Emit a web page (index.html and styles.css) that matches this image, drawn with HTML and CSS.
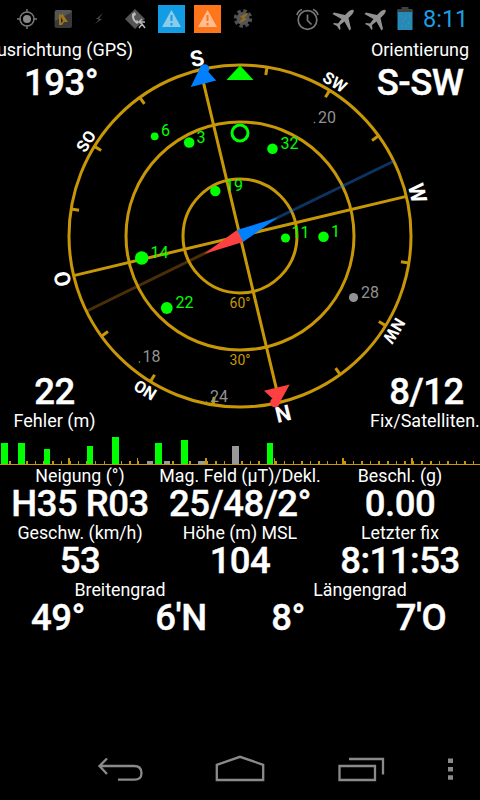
FILE: index.html
```html
<!DOCTYPE html>
<html lang="de">
<head>
<meta charset="utf-8">
<title>GPS Status</title>
<link rel="stylesheet" href="styles.css">
</head>
<body>
<header class="status">
  <svg class="status-icons" width="420" height="38" viewBox="0 0 420 38">
    <g fill="none" stroke="#777" stroke-width="1.5"><circle cx="27" cy="19" r="7"/><path d="M27 9v4M27 25v4M17 19h4M33 19h4"/></g>
    <circle cx="27" cy="19" r="4" fill="#888"/>
    <rect x="54.500" y="10" width="17.500" height="18" rx="2" fill="#393939"/><path d="M55 12q0-2 2-2h13q2 0 2 2l-17 9z" fill="#555"/><path d="M59 14l3 1 0-2 6 9-4 0-2 3-3 0z" fill="#9b7421"/><path d="M61 17v6l2-2z" fill="#29251e"/>
    <path d="M103 13l-7 6 3 .5-4 4.500 7-5-3-.5z" fill="#494949"/>
    <path d="M135 9l10 10-10 10-10-10z" fill="#555"/><path d="M132 14q-1 6 5 10l2-2-2-2-1 1q-2-2-2-5l2-1-1-3z" fill="#bbb"/><path d="M142 19l-3 3 3 2-3 4M142 24l3 4M140 22h5" stroke="#b5b5b5" stroke-width="1.500" fill="none"/>
    <rect x="158" y="5" width="27" height="28" fill="#129ce3"/><path d="M171.500 10l9.500 17h-19z" fill="#8dcbea"/><path d="M171.500 15v6M171.500 23v2.500" stroke="#129ce3" stroke-width="2"/>
    <rect x="194" y="5" width="27" height="28" fill="#ff7519"/><path d="M207.500 10l9.500 17h-19z" fill="#ffbd91"/><path d="M207.500 15v6M207.500 23v2.500" stroke="#ff7519" stroke-width="2"/>
    <circle cx="243" cy="18.500" r="7.500" fill="none" stroke="#505050" stroke-width="3.500" stroke-dasharray="3.4 2.490"/><circle cx="243" cy="18.500" r="6.500" fill="#555"/><path d="M249 12l-9 5 3 1-5 6 9-5-3-1z" fill="#98701c"/>
    <g fill="none" stroke="#777" stroke-width="1.700"><circle cx="307.500" cy="20" r="9.300"/><path d="M307.500 14.500v6l4 4M297 15q1-4 5-5.500M318 15q-1-4-5-5.500"/></g>
    <g fill="#929292"><path id="plane" d="M353.500 10q-2-1-5 1.500l-3.500 3.500-11-2.500-1.500 1.500 9 5-3.500 4.500-4-.5-1 1 4 2 2.500 4 1-1-.5-4 4.500-3.500 5 9 1.500-1.500-2.500-11 3.500-3.500q2.500-3 1.500-4.500z"/><use href="#plane" x="32"/></g>
    <rect x="397.500" y="10" width="15" height="20" fill="#268ab8"/><path d="M397.500 12V9h4V7h7v2h4v3z" fill="#404040"/><path d="M401 16h1M405 18h1M409 16h1M403 21h1M408 23h1M402 26h1M406 26h1" stroke="#6d8d94"/>
  </svg>
  <time class="clock">8:11</time>
</header>

<main>
  <section class="stage">
    <svg class="compass" width="480" height="437" viewBox="0 0 480 437">
      <g transform="translate(240 236)">
        <path d="M-153 75L0 0" stroke="#4a2e08" stroke-width="3"/>
        <g fill="none" stroke="#c79707" stroke-width="3">
          <circle r="171"/><circle r="114"/><circle r="57"/>
          <g transform="rotate(-13.400)">
            <path d="M0-171V171M-171 0H171"/>
            <g id="ticks"><path d="M0-171v8" transform="rotate(22.500)"/><path d="M0-171v8" transform="rotate(45)"/><path d="M0-171v8" transform="rotate(67.500)"/></g>
            <use href="#ticks" transform="rotate(90)"/><use href="#ticks" transform="rotate(180)"/><use href="#ticks" transform="rotate(270)"/>
          </g>
        </g>
        <path d="M154-75L0 0" stroke="#2080ed" stroke-opacity=".4" stroke-width="3"/>
        <g class="cardinal">
          <text y="-175" transform="rotate(-13.600)">S</text>
          <text y="-175" transform="rotate(76.400)">W</text>
          <text y="-175" transform="rotate(166.400)">N</text>
          <text y="-175" transform="rotate(256.400)">O</text>
        </g>
        <g class="intercardinal">
          <text y="-175" transform="rotate(31.600)">SW</text>
          <text y="-175" transform="rotate(121.600)">NW</text>
          <text y="-175" transform="rotate(211.600)">NO</text>
          <text y="-175" transform="rotate(301.600)">SO</text>
        </g>
      </g>
      <path d="M240 65.500L253.500 80h-27z" fill="#0f0"/>
      <path d="M190.700 87L216.200 80.400 208.500 72 200 68z" fill="#0080ff"/><circle cx="204.500" cy="69" r="4.800" fill="#0080ff"/>
      <path d="M264 390.700L289.700 384.600 279.500 403 271 403 273 399z" fill="#ff4040"/><circle cx="275" cy="402.500" r="4.800" fill="#ff4040"/>
      <g class="elevation"><text x="240" y="308">60°</text><text x="240" y="365">30°</text></g>
      <g fill="#0f0">
        <circle cx="154.700" cy="136.300" r="3.900"/><circle cx="189.200" cy="142.500" r="5.300"/>
        <circle cx="215.300" cy="191" r="5.200"/><circle cx="272.500" cy="148.800" r="5.300"/>
        <circle cx="141.700" cy="258" r="6.700"/><circle cx="166.800" cy="308" r="5.900"/>
        <circle cx="285.500" cy="238" r="4.600"/><circle cx="323.500" cy="236.800" r="5.300"/>
        <circle cx="240" cy="133" r="8" fill="none" stroke="#0f0" stroke-width="3"/>
        <g class="sat"><text x="161" y="136">6</text><text x="196.500" y="143">3</text><text x="225" y="191">19</text><text x="280.500" y="149">32</text><text x="150.500" y="258">14</text><text x="175.500" y="308">22</text><text x="291.500" y="238">11</text><text x="331" y="237">1</text></g>
      </g>
      <g fill="#929292">
        <circle cx="353.500" cy="297.500" r="4.600"/><circle cx="314.500" cy="122.500" r=".8"/><circle cx="139.500" cy="362" r=".8"/><circle cx="206.500" cy="402" r=".8"/>
        <g class="sat"><text x="318" y="123">20</text><text x="142.500" y="362">18</text><text x="210" y="402">24</text><text x="361" y="298">28</text></g>
      </g>
      <path d="M278 217.500L237 230 243 242z" fill="#0080ff"/>
      <path d="M204 254L237 230 243 242z" fill="#ff4040"/>
    </svg>
    <div class="corner top left"><span class="label">Ausrichtung (GPS)</span><strong class="value">193°</strong></div>
    <div class="corner top right"><span class="label">Orientierung</span><strong class="value">S-SW</strong></div>
    <div class="corner bottom left"><strong class="value">22</strong><span class="label">Fehler (m)</span></div>
    <div class="corner bottom right"><strong class="value">8/12</strong><span class="label">Fix/Satelliten.</span></div>
  </section>

  <svg class="signals" width="480" height="28" viewBox="0 437 480 28" shape-rendering="crispEdges">
    <path d="M.500 462.500H480" stroke="#c79707" stroke-width="3" stroke-dasharray="1.500 7.090"/>
    <path d="M68 458h2v6h-2zM137 458h1v6h-1zM205 458h2v6h-2zM274 458h1v6h-1zM342 458h2v6h-2zM411 458h2v6h-2z" fill="#c79707"/>
    <path d="M1 443h7v21H1zM18 443h7v21h-7zM44 449h6v15h-6zM87 446h6v18h-6zM112 437h7v27h-7zM155 443h7v21h-7zM181 440h7v24h-7zM267 443h6v21h-6z" fill="#0f0"/>
    <path d="M147 461h6v3h-6zM164 461h6v3h-6zM198 461h7v3h-7zM232 446h7v18h-7z" fill="#999"/>
    <path d="M0 464h480v1H0z" fill="#c79707"/>
  </svg>

  <section class="readings">
    <div class="row thirds">
      <div class="cell"><span class="label">Neigung (°)</span><strong class="value">H35 R03</strong></div>
      <div class="cell"><span class="label">Mag. Feld (µT)/Dekl.</span><strong class="value">25/48/2°</strong></div>
      <div class="cell"><span class="label">Beschl. (g)</span><strong class="value">0.00</strong></div>
    </div>
    <div class="row thirds">
      <div class="cell"><span class="label">Geschw. (km/h)</span><strong class="value">53</strong></div>
      <div class="cell"><span class="label">Höhe (m) MSL</span><strong class="value">104</strong></div>
      <div class="cell"><span class="label">Letzter fix</span><strong class="value">8:11:53</strong></div>
    </div>
    <div class="row halves"><span class="label">Breitengrad</span><span class="label">Längengrad</span></div>
    <div class="row coords"><strong class="value">49°</strong><strong class="value">6'N</strong><strong class="value">8°</strong><strong class="value">7'O</strong></div>
  </section>
</main>

<nav class="navbar">
  <svg width="480" height="60" viewBox="0 740 480 60" fill="none" stroke="#8a8a8a" stroke-width="2.300">
    <path d="M107 758.500l-7.500 7.500 7.500 8M100 766h34q7.500 0 7.500 7t-7.500 6.700h-16"/>
    <path d="M216.800 780v-15.200l23.200-8 23.200 8V780z"/>
    <path d="M339.500 766h35.500v14h-35.500zM349 759h34v15.500"/>
    <path d="M448 758.500h5v4.500h-5zM448 767h5v4.500h-5zM448 775.300h5v4.500h-5z" fill="#8a8a8a" stroke="none"/>
  </svg>
</nav>
</body>
</html>
```
FILE: styles.css
```css
* { box-sizing: border-box; }

body {
  margin: 0;
  width: 480px;
  height: 800px;
  display: flex;
  flex-direction: column;
  overflow: hidden;
  background: #000;
  color: #fff;
  font-family: Roboto, "Liberation Sans", sans-serif;
}

.status { height: 38px; flex: none; display: flex; }
.status-icons { flex: none; }
.clock { padding-left: 3px; font-size: 23.5px; line-height: 39px; color: #1c9ee3; white-space: nowrap; }

main { flex: 1; }

.label { font-size: 18px; line-height: 21px; white-space: nowrap; text-align: center; }
.value {
  font-size: 36.5px;
  line-height: 35px;
  padding-bottom: 1px;
  font-weight: 500;
  letter-spacing: -0.5px;
  -webkit-text-stroke: 0.4px #fff;
  white-space: nowrap;
  text-align: center;
}

.stage {
  position: relative;
  height: 399px;
  display: grid;
  grid-template-columns: 122px 120px;
  justify-content: space-between;
  align-content: space-between;
  padding: 1px 0 6px;
}
.compass { position: absolute; left: 0; top: -38px; }
.corner { display: flex; flex-direction: column; align-items: center; min-width: 0; position: relative; }
.top .value { margin-top: 5px; }
.top.left .label { align-self: flex-end; margin-right: -11px; }
.bottom.left { margin-left: -13px; }
.bottom.right { padding-left: 13px; }
.bottom.right .label { align-self: flex-start; margin-left: -3px; }

.cardinal { font-size: 22px; font-weight: 700; fill: #fff; text-anchor: middle; }
.intercardinal { font-size: 16.5px; font-weight: 700; fill: #fff; text-anchor: middle; }
.elevation { font-size: 14px; fill: #c79707; text-anchor: middle; }
.sat { font-size: 16px; }

.signals { display: block; }

.row { display: grid; }
.row .label { font-size: 17.8px; }
.thirds { grid-template-columns: repeat(3, 160px); height: 57px; }
.cell { display: flex; flex-direction: column; align-items: center; }
.halves { grid-template-columns: repeat(2, 240px); }
.coords { grid-template-columns: 116px 130px 84px 150px; }
.coords .value:last-child { padding-left: 32px; }

.navbar { height: 60px; flex: none; }
.navbar svg { display: block; }
```
